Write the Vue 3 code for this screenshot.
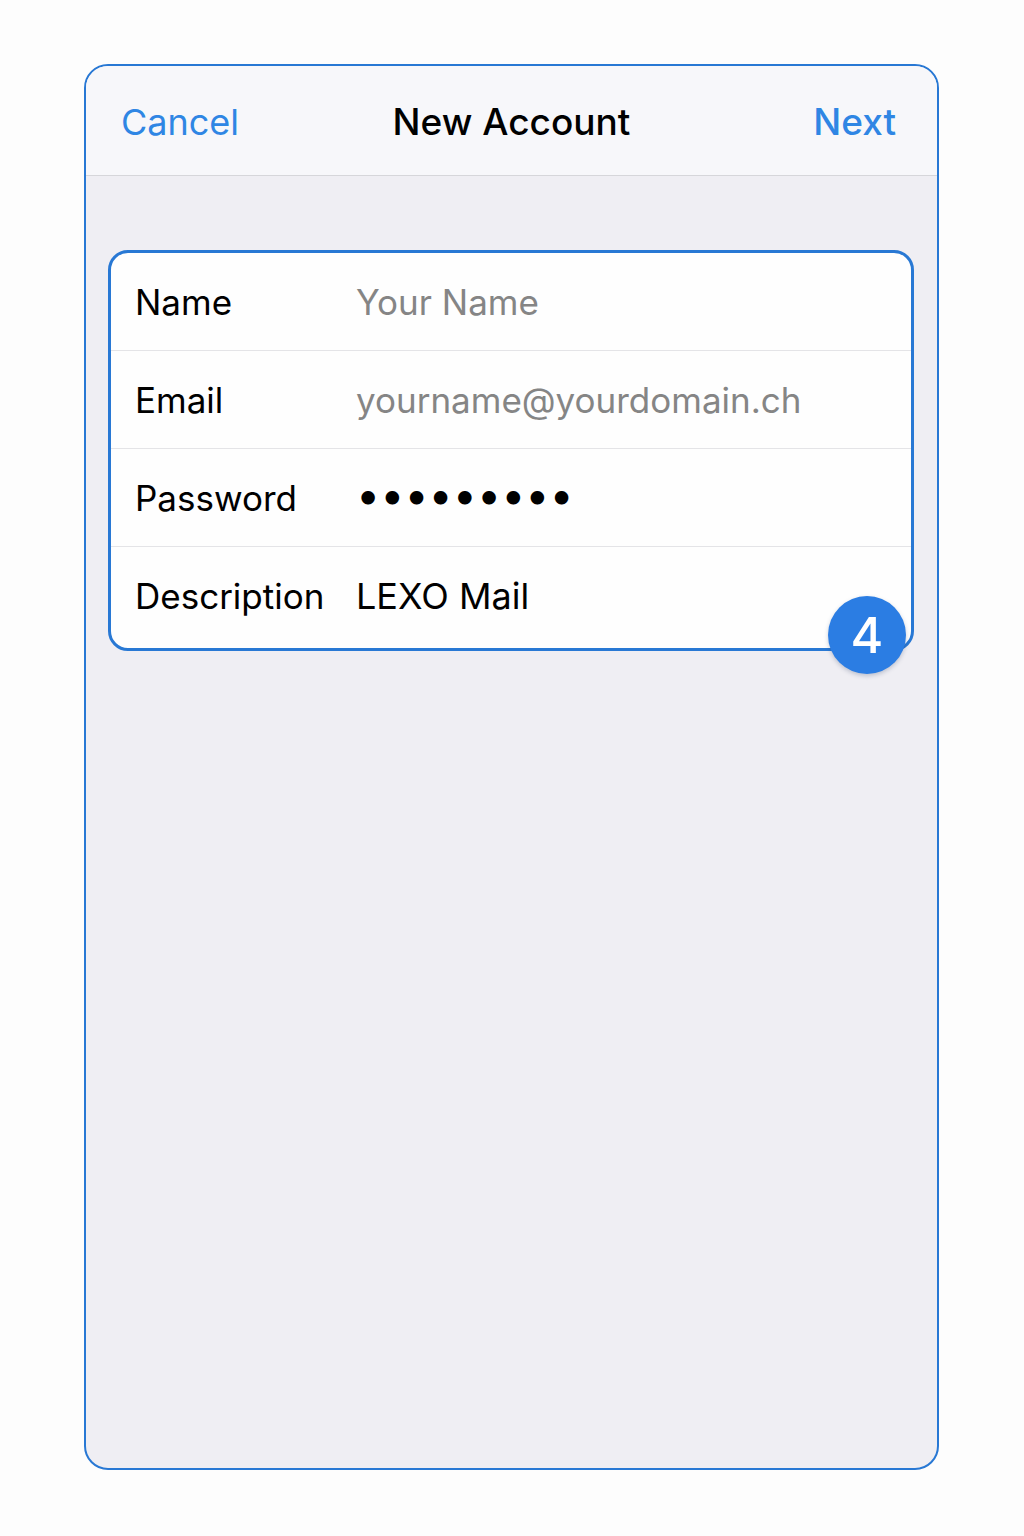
<template>
  <main class="page">
    <form class="phone" @submit.prevent>
      <header class="nav-bar">
        <button type="button" class="nav-button">Cancel</button>
        <h1>New Account</h1>
        <button type="submit" class="nav-button is-next">Next</button>
      </header>

      <section class="field-card">
        <div v-for="field in fields" :key="field.id" class="field-row">
          <label :for="field.id">{{ field.label }}</label>
          <input
            :id="field.id"
            v-model="field.value"
            :type="field.type"
            :placeholder="field.placeholder"
            autocomplete="off"
            spellcheck="false"
          />
        </div>
        <span class="step-badge">4</span>
      </section>
    </form>
  </main>
</template>

<script setup>
import { reactive } from 'vue';

const fields = reactive([
  { id: 'name', label: 'Name', type: 'text', value: '', placeholder: 'Your Name' },
  { id: 'email', label: 'Email', type: 'email', value: '', placeholder: 'yourname@yourdomain.ch' },
  { id: 'password', label: 'Password', type: 'password', value: 'lexo-mail', placeholder: '' },
  { id: 'description', label: 'Description', type: 'text', value: 'LEXO Mail', placeholder: '' },
]);
</script>

<style>
body {
  margin: 0;
  background: #FDFDFD;
}
</style>

<style scoped>
.page {
  box-sizing: border-box;
  min-height: 100vh;
  padding: 64px 85px 66px 84px;
  display: flex;
  font-family: Inter, "Liberation Sans", sans-serif;
  font-size: 35px;
  color: #000000;
}

.phone {
  flex: 1;
  min-width: 0;
  border: 2px solid #2878D4;
  border-radius: 24px;
  background: #EFEEF3;
}

.nav-bar {
  box-sizing: border-box;
  height: 110px;
  padding: 2px 35px 0;
  border-bottom: 1px solid #D6D6DA;
  border-radius: 22px 22px 0 0;
  background: #F7F7FA;
  display: grid;
  grid-template-columns: 1fr auto 1fr;
  align-items: center;
}

.nav-bar h1 {
  margin: 0;
  font-size: 37px;
  font-weight: 500;
}

.nav-button {
  padding: 0;
  border: 0;
  background: none;
  font: inherit;
  font-size: 36px;
  color: #2F86E4;
  text-align: left;
  cursor: pointer;
}

.nav-button.is-next {
  padding-right: 6px;
  font-size: 37px;
  font-weight: 500;
  text-align: right;
}

.field-card {
  position: relative;
  margin: 74px 23px 0 22px;
  padding-bottom: 4px;
  border: 3px solid #2878D4;
  border-radius: 20px;
  background: #FEFEFE;
}

.field-row {
  height: 97px;
  padding: 0 24px;
  display: grid;
  grid-template-columns: 221px 1fr;
  align-items: center;
}

.field-row + .field-row {
  border-top: 1px solid #E4E4E7;
}

.field-row input {
  width: 100%;
  min-width: 0;
  padding: 0;
  border: 0;
  outline: 0;
  background: none;
  font: inherit;
  font-size: 36px;
  color: inherit;
}

.field-row input::placeholder {
  font-size: 35px;
  color: #858585;
  opacity: 1;
}

/* larger type so the masking dots read as solid discs */
.field-row input[type="password"] {
  padding-bottom: 8px;
  font-size: 43px;
}

.step-badge {
  position: absolute;
  right: 5px;
  bottom: -26px;
  width: 78px;
  height: 78px;
  border-radius: 50%;
  background: #2B7DE3;
  box-shadow: 0 2px 4px rgba(40, 60, 100, 0.25);
  display: flex;
  align-items: center;
  justify-content: center;
  font-size: 50px;
  font-weight: 500;
  color: #FFFFFF;
}
</style>
